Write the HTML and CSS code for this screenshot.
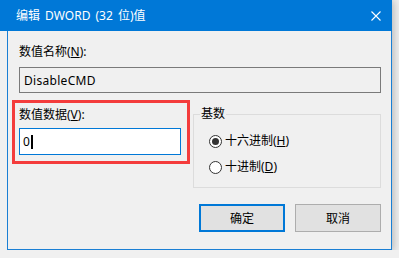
FILE: index.html
```html
<!DOCTYPE html>
<html lang="zh-CN">
<head>
<meta charset="utf-8">
<title>编辑 DWORD (32 位)值</title>
<link rel="stylesheet" href="styles.css">
</head>
<body>
<div class="window">
  <header class="titlebar">
    <span class="title">编辑 DWORD (32 位)值</span>
    <svg class="close" width="10" height="10" viewBox="0 0 10 10"><path d="M0.5 0.5L9.5 9.5M9.5 0.5L0.5 9.5" stroke="#fff" stroke-width="1.1" fill="none"/></svg>
  </header>
  <div class="client">
    <div class="label">数值名称(<u>N</u>):</div>
    <div class="textbox readonly">DisableCMD</div>
    <div class="middle">
      <div class="data-col">
        <div class="label">数值数据(<u>V</u>):</div>
        <div class="textbox edit"><span>0</span><span class="caret"></span></div>
        <div class="highlight"></div>
      </div>
      <fieldset class="group">
        <legend>基数</legend>
        <div class="radio-row first"><span class="radio checked"></span><span>十六进制(<u>H</u>)</span></div>
        <div class="radio-row"><span class="radio"></span><span>十进制(<u>D</u>)</span></div>
      </fieldset>
    </div>
    <div class="buttons">
      <button class="btn default">确定</button>
      <button class="btn">取消</button>
    </div>
  </div>
</div>
</body>
</html>
```
FILE: styles.css
```css
html, body {
  margin: 0;
  padding: 0;
}
body {
  background: #f0f0f0;
  font-family: "Noto Sans", "Noto Sans CJK SC", sans-serif;
  font-size: 12px;
  color: #000;
  overflow: hidden;
}
.window {
  width: 392px;
  height: 250px;
  box-shadow: 0 1px 9px 1px rgba(0, 0, 0, 0.28);
}
.titlebar {
  height: 31px;
  box-sizing: border-box;
  background: #0078d7;
  color: #fff;
  display: flex;
  align-items: center;
  justify-content: space-between;
  padding: 0 11px 0 16px;
}
.title {
  line-height: 16px;
  word-spacing: 2px;
}
.close {
  display: block;
}
.client {
  margin-left: 7px;
  height: 219px;
  box-sizing: border-box;
  background: #f0f0f0;
  border: 1px solid #1a7fd4;
  border-top: 0;
  padding: 13px 10px 0 11px;
}
.label {
  line-height: 16px;
  height: 16px;
}
.textbox {
  box-sizing: border-box;
  display: flex;
  align-items: center;
}
.readonly {
  margin-top: 7px;
  height: 26px;
  border: 1px solid #7a7a7a;
  padding-left: 4px;
  background: #f0f0f0;
  letter-spacing: 0.3px;
}
.middle {
  display: flex;
  gap: 12px;
  margin-top: 13px;
  align-items: flex-start;
}
.data-col {
  position: relative;
  width: 162px;
  padding-top: 1px;
}
.edit {
  margin-top: 5px;
  height: 27px;
  border: 1px solid #0078d7;
  background: #fff;
  padding-left: 3px;
}
.caret {
  width: 2px;
  height: 14px;
  background: #000;
  margin-left: 1px;
}
.highlight {
  position: absolute;
  top: -6px;
  left: -7px;
  right: -9px;
  bottom: -9px;
  border: 3px solid #f43c3c;
}
.group {
  margin: 0;
  width: 188px;
  height: 82px;
  box-sizing: border-box;
  border: 1px solid #dcdcdc;
  padding: 0 0 0 6px;
  min-width: 0;
}
.group legend {
  padding: 0 1px;
  line-height: 16px;
}
.radio-row {
  display: flex;
  align-items: center;
  height: 16px;
  line-height: 16px;
  margin-top: 10px;
  margin-left: 9px;
}
.radio-row.first {
  margin-top: 11px;
}
.radio {
  width: 13px;
  height: 13px;
  box-sizing: border-box;
  border: 1px solid #333;
  border-radius: 50%;
  background: #fff;
  margin-right: 3px;
  display: flex;
  align-items: center;
  justify-content: center;
}
.radio.checked::after {
  content: "";
  width: 7px;
  height: 7px;
  border-radius: 50%;
  background: #333;
}
.buttons {
  display: flex;
  justify-content: flex-end;
  gap: 10px;
  margin-top: 16px;
}
.btn {
  width: 86px;
  height: 28px;
  box-sizing: border-box;
  background: #e1e1e1;
  border: 1px solid #adadad;
  font-family: inherit;
  font-size: 12px;
  color: #000;
  padding: 0;
}
.btn.default {
  border: 2px solid #0078d7;
}
```
